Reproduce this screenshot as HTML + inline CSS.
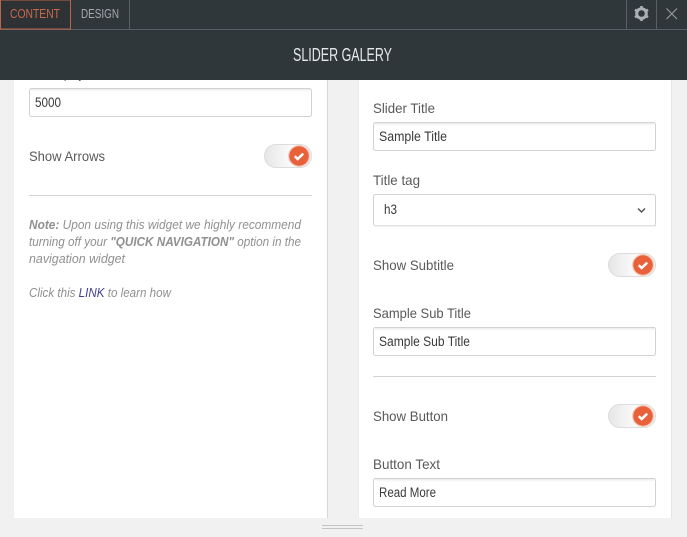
<!DOCTYPE html>
<html><head><meta charset="utf-8"><style>
html,body{margin:0;padding:0;width:687px;height:537px;overflow:hidden;background:#f1f1f1}
svg{display:block}
text{font-family:"Liberation Sans",sans-serif;font-size:14px;fill:#5a5a5a}
.v{font-size:13.5px;fill:#3a3a3a}
.n{font-size:13px;font-style:italic;fill:#909090}
.b{fill:#fff;stroke:#d2d2d2}
</style></head><body>
<svg width="687" height="537" viewBox="0 0 687 537" xmlns="http://www.w3.org/2000/svg">
<defs>
<linearGradient id="tr" x1="0" y1="0" x2="1" y2="0"><stop offset="0" stop-color="#e6e6e6"/><stop offset=".55" stop-color="#fafafa"/><stop offset="1" stop-color="#f0f0f0"/></linearGradient>
<linearGradient id="ih" x1="0" y1="0" x2="0" y2="1"><stop offset="0" stop-color="#ececec"/><stop offset="1" stop-color="#fff"/></linearGradient>
<g id="tog">
<rect x="0.5" y="0.5" width="47" height="23" rx="11.5" fill="url(#tr)" stroke="#dcdcdc"/>
<circle cx="35" cy="12" r="11" fill="#f5cdbd"/>
<circle cx="35" cy="12" r="9.8" fill="#e9613a"/>
<path d="M30.800 12.200l2.900 2.800 5.500-5.400" fill="none" stroke="#fff" stroke-width="2.500"/>
</g>
</defs>
<rect width="687" height="537" fill="#f1f1f1"/>
<rect x="14" y="80" width="314" height="438" fill="#fff"/>
<rect x="327" y="80" width="1" height="438" fill="#d8d8d8"/>
<rect x="358" y="80" width="314" height="438" fill="#fff"/>
<rect x="358" y="80" width="1" height="438" fill="#ececec"/>
<rect x="671" y="80" width="1" height="438" fill="#e4e4e4"/>

<text x="48" y="78" textLength="36" lengthAdjust="spacingAndGlyphs">Display</text>
<rect y="0" width="687" height="80" fill="#30373b"/>
<rect y="29" width="687" height="1" fill="#596065"/>
<rect x="0.5" y="0" width="70" height="29" fill="#2e3235" stroke="#b9644c"/>
<rect x="129" y="0" width="1" height="29" fill="#596065"/>
<rect x="626" y="0" width="1" height="29" fill="#596065"/>
<rect x="656" y="0" width="1" height="29" fill="#596065"/>
<text x="10" y="18" style="font-size:12.5px;fill:#c8694c" textLength="50" lengthAdjust="spacingAndGlyphs">CONTENT</text>
<text x="81" y="18" style="font-size:12.5px;fill:#a3a9ad" textLength="38" lengthAdjust="spacingAndGlyphs">DESIGN</text>
<circle cx="641.500" cy="13.500" r="4.800" fill="none" stroke="#aab0b4" stroke-width="3"/>
<path d="M641.500 6v2M641.500 19v2M635 9.700l1.700 1M646.300 16.300l1.700 1M635 17.300l1.700-1M646.300 10.700l1.700-1" stroke="#aab0b4" stroke-width="2.600"/>
<path d="M666.500 8.500l10.500 10.500M677 8.500l-10.500 10.500" stroke="#969ca0" stroke-width="1.100" fill="none"/>
<text x="293" y="61" style="font-size:18px;fill:#e6e8e9" textLength="99" lengthAdjust="spacingAndGlyphs">SLIDER GALERY</text>

<rect class="b" x="29.500" y="88.500" width="282" height="28" rx="2"/>
<rect x="31" y="89" width="279" height="3" fill="url(#ih)"/>
<text class="v" x="35" y="107" textLength="26" lengthAdjust="spacingAndGlyphs">5000</text>
<text x="29" y="161" textLength="76" lengthAdjust="spacingAndGlyphs">Show Arrows</text>
<use href="#tog" x="264" y="144"/>
<rect x="29" y="195" width="283" height="1" fill="#d2d2d2"/>
<text class="n" x="29" y="229" textLength="272" lengthAdjust="spacingAndGlyphs"><tspan font-weight="bold">Note:</tspan> Upon using this widget we highly recommend</text>
<text class="n" x="29" y="246" textLength="272" lengthAdjust="spacingAndGlyphs">turning off your <tspan font-weight="bold">"QUICK NAVIGATION"</tspan> option in the</text>
<text class="n" x="29" y="263" textLength="96" lengthAdjust="spacingAndGlyphs">navigation widget</text>
<text class="n" x="29" y="297" textLength="142" lengthAdjust="spacingAndGlyphs">Click this <tspan style="fill:#3f3f8f">LINK</tspan> to learn how</text>

<text x="373" y="113" textLength="62" lengthAdjust="spacingAndGlyphs">Slider Title</text>
<rect class="b" x="373.500" y="122.500" width="282" height="28" rx="2"/>
<rect x="375" y="123" width="279" height="3" fill="url(#ih)"/>
<text class="v" x="379" y="141" textLength="68" lengthAdjust="spacingAndGlyphs">Sample Title</text>
<text x="373" y="185" textLength="47" lengthAdjust="spacingAndGlyphs">Title tag</text>
<rect class="b" x="373.500" y="194.500" width="282" height="31" rx="2"/>
<rect x="374" y="225" width="282" height="1.500" fill="#e2e2e2"/>
<text class="v" x="384" y="214" textLength="13" lengthAdjust="spacingAndGlyphs">h3</text>
<path d="M638 208.500l3.500 3.500 3.500-3.500" fill="none" stroke="#555" stroke-width="1.500"/>
<text x="373" y="270" textLength="81" lengthAdjust="spacingAndGlyphs">Show Subtitle</text>
<use href="#tog" x="608" y="253"/>
<text x="373" y="318" textLength="98" lengthAdjust="spacingAndGlyphs">Sample Sub Title</text>
<rect class="b" x="373.500" y="327.500" width="282" height="28" rx="2"/>
<rect x="375" y="328" width="279" height="3" fill="url(#ih)"/>
<text class="v" x="379" y="346" textLength="91" lengthAdjust="spacingAndGlyphs">Sample Sub Title</text>
<rect x="373" y="376" width="283" height="1" fill="#d2d2d2"/>
<text x="373" y="421" textLength="75" lengthAdjust="spacingAndGlyphs">Show Button</text>
<use href="#tog" x="608" y="404"/>
<text x="373" y="469" textLength="67" lengthAdjust="spacingAndGlyphs">Button Text</text>
<rect class="b" x="373.500" y="478.500" width="282" height="28" rx="2"/>
<rect x="375" y="479" width="279" height="3" fill="url(#ih)"/>
<text class="v" x="379" y="497" textLength="57" lengthAdjust="spacingAndGlyphs">Read More</text>

<rect x="322" y="525" width="41" height="1" fill="#c4c4c4"/>
<rect x="322" y="528" width="41" height="1" fill="#c4c4c4"/>
</svg>
</body></html>
